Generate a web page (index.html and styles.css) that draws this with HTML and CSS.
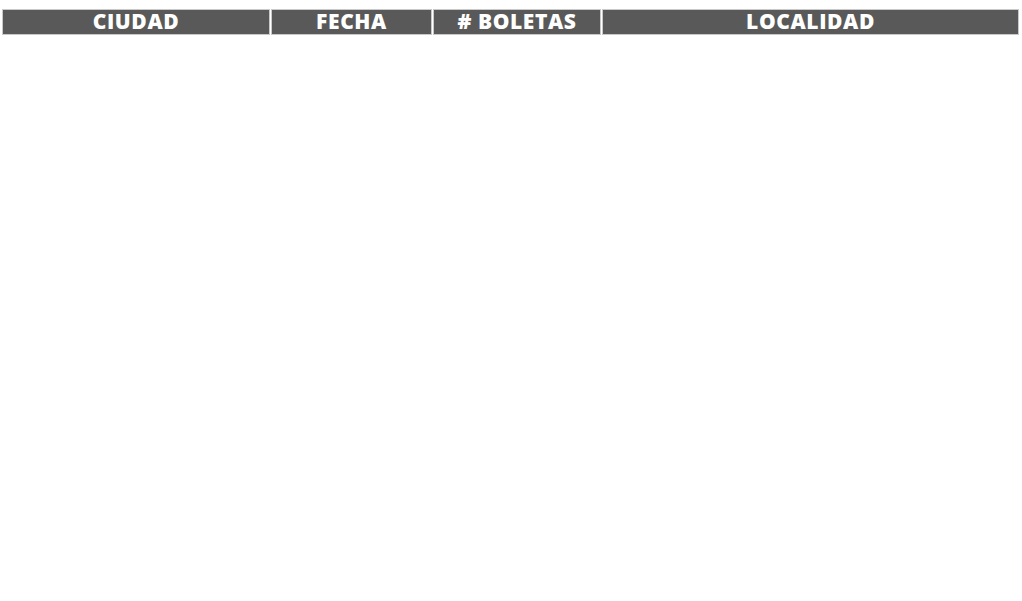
FILE: index.html
```html
<!DOCTYPE html>
<html lang="es">
<head>
<meta charset="utf-8">
<title>Boletas</title>
<link rel="stylesheet" href="styles.css">
</head>
<body>
<div class="table-head">
  <div class="cell">CIUDAD</div>
  <div class="cell">FECHA</div>
  <div class="cell"># BOLETAS</div>
  <div class="cell">LOCALIDAD</div>
</div>
</body>
</html>
```
FILE: styles.css
```css
html, body {
  margin: 0;
  padding: 0;
  background: #fff;
}
body {
  padding: 9px 0 0 2px;
  font-family: "Open Sans", "DejaVu Sans", sans-serif;
}
.table-head {
  display: grid;
  grid-template-columns: 268px 161px 168px 417px;
  column-gap: 1px;
  width: 1017px;
}
.cell {
  height: 24px;
  background: #595959;
  border: 1px solid #c9c9c9;
  color: #fff;
  font-weight: 800;
  font-size: 21px;
  line-height: 22px;
  text-align: center;
  letter-spacing: 0.6px;
}
```
